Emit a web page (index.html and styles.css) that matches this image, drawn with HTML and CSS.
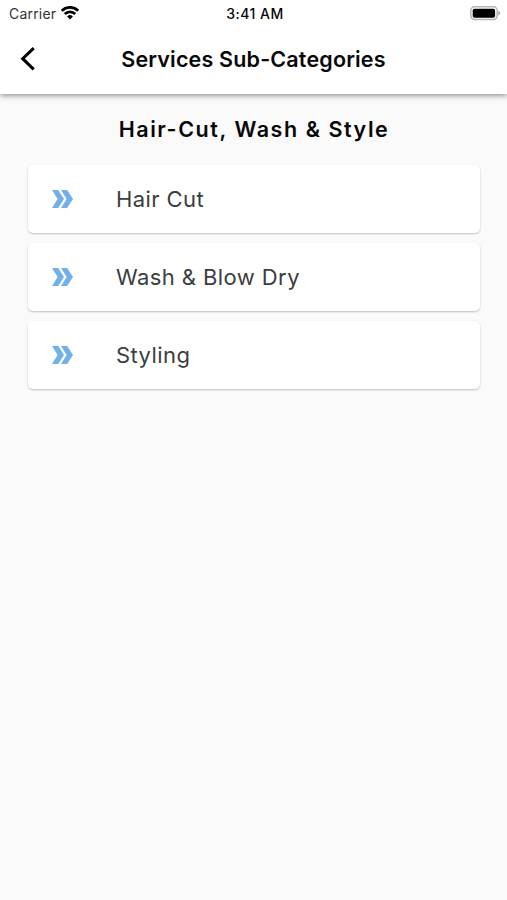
FILE: index.html
```html
<!DOCTYPE html>
<html lang="en">
<head>
  <meta charset="UTF-8" />
  <meta name="viewport" content="width=device-width, initial-scale=1.0" />
  <title>Services Sub-Categories</title>
  <link rel="stylesheet" href="styles.css">
</head>
<body>

  <header class="app-header">
    <!-- Status Bar -->
    <div class="status-bar">
      <div class="status-left">
        <span class="carrier">Carrier</span>
        <svg class="wifi" width="18" height="14" viewBox="0 0 18 14">
          <g fill="none" stroke="#000" stroke-width="2.7">
            <path d="M.8 4.7a11.600 11.600 0 0 1 16.400 0" />
            <path d="M3.800 8a7.300 7.300 0 0 1 10.400 0" />
          </g>
          <path d="M9 13.400L6.100 10.500a4.100 4.100 0 0 1 5.800 0z" />
        </svg>
      </div>
      <span class="time">3:41 AM</span>
      <div class="status-right">
        <svg width="31" height="15" viewBox="0 0 31 15">
          <rect x="0.8" y="0.8" width="26.4" height="12.8" rx="3.8" fill="#fff" stroke="#b5b5b5" stroke-width="1.5" />
          <rect x="2.7" y="2.7" width="22.4" height="9" rx="1.8" fill="#000" />
          <path d="M28.4 5v4.4c1-.3 1.8-1.2 1.8-2.2s-.8-1.9-1.8-2.200z" fill="#a8a8a8" />
        </svg>
      </div>
    </div>

    <!-- Navbar -->
    <nav class="navbar">
      <a href="#" class="back" aria-label="Back">
        <svg width="16" height="26" viewBox="0 0 16 26">
          <path d="M13.700 2.200L2.700 12.700L13.700 23.400" fill="none" stroke="#000" stroke-width="3" />
        </svg>
      </a>
      <h1 class="nav-title">Services Sub-Categories</h1>
    </nav>
  </header>

  <main class="content">
    <h2 class="category">Hair-Cut, Wash &amp; Style</h2>
    <ul class="services">
      <li class="service">
        <svg class="chevrons" width="22" height="18" viewBox="0 0 22 18">
          <path d="M0 0h6.200l5.800 9-5.800 9H0l5.600-9zM9 0h6.200l5.800 9-5.800 9H9l5.600-9z" />
        </svg>
        <span class="name">Hair Cut</span>
      </li>
      <li class="service">
        <svg class="chevrons" width="22" height="18" viewBox="0 0 22 18">
          <path d="M0 0h6.200l5.800 9-5.800 9H0l5.600-9zM9 0h6.200l5.800 9-5.800 9H9l5.600-9z" />
        </svg>
        <span class="name">Wash &amp; Blow Dry</span>
      </li>
      <li class="service">
        <svg class="chevrons" width="22" height="18" viewBox="0 0 22 18">
          <path d="M0 0h6.200l5.800 9-5.800 9H0l5.600-9zM9 0h6.200l5.800 9-5.800 9H9l5.600-9z" />
        </svg>
        <span class="name">Styling</span>
      </li>
    </ul>
  </main>

</body>
</html>
```
FILE: styles.css
```css
* {
  box-sizing: border-box;
}
body {
  margin: 0;
  min-height: 100vh;
  font-family: Inter, "Open Sans", sans-serif;
  background-color: #fafafa;
  color: #080808;
}
svg {
  display: block;
}
/* Header */
.app-header {
  height: 94px;
  background-color: #fff;
  box-shadow: 0 1px 6px rgba(0, 0, 0, 0.5);
}
/* Status Bar */
.status-bar {
  display: grid;
  grid-template-columns: 1fr auto 1fr;
  align-items: center;
  height: 26px;
  padding: 0 6px 0 9px;
}
.status-left {
  display: flex;
  align-items: center;
  gap: 5px;
}
.carrier {
  font-size: 14px;
  letter-spacing: 0.2px;
  color: #333;
}
.time {
  font-size: 14px;
  font-weight: 500;
  letter-spacing: 0.5px;
}
.status-right {
  display: flex;
  justify-content: flex-end;
}
/* Navbar */
.navbar {
  display: grid;
  grid-template-columns: 40px 1fr 40px;
  align-items: center;
  height: 66px;
  padding: 0 20px;
}
.nav-title {
  margin: 0;
  font-size: 21.5px;
  font-weight: 600;
  letter-spacing: 0.17px;
  text-align: center;
  white-space: nowrap;
}
/* Sub-category List */
.content {
  padding: 20px 27px 0 28px;
}
.category {
  margin: 0;
  font-size: 21.5px;
  font-weight: 600;
  line-height: 30px;
  letter-spacing: 1.56px;
  text-align: center;
  white-space: nowrap;
}
.services {
  display: flex;
  flex-direction: column;
  gap: 10px;
  margin: 21px 0 0;
  padding: 0;
  list-style: none;
}
.service {
  display: flex;
  align-items: center;
  gap: 42px;
  height: 68px;
  padding-left: 24px;
  background-color: #fff;
  border-radius: 5px;
  box-shadow: 0 1px 2px rgba(0, 0, 0, 0.24);
}
.chevrons {
  fill: #71b1e8;
}
.name {
  font-size: 22px;
  letter-spacing: 0.42px;
  color: #3b3d40;
}
```
